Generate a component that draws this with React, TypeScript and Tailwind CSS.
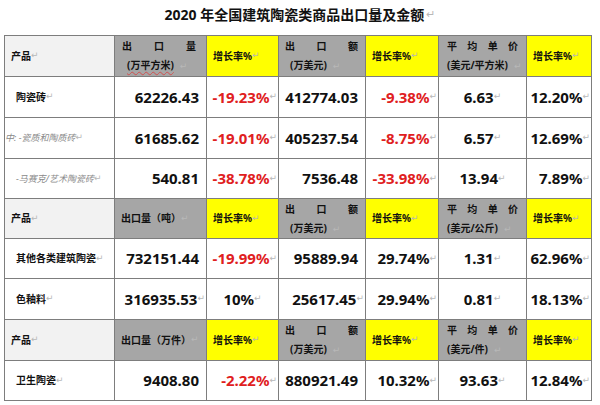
import React from "react";

const Mark = () => <span className="text-[9px] font-normal text-[#b8b8b8] font-['DejaVu_Sans',sans-serif]">↵</span>;

type CellProps = { bg?: string; className?: string; children?: React.ReactNode };

const Cell = ({ bg = "bg-white", className = "", children }: CellProps) => (
  <div className={`${bg} flex items-center overflow-visible whitespace-nowrap ${className}`}>{children}</div>
);

const Spread = ({ text }: { text: string }) => (
  <div className="flex justify-between">
    {text.split("").map((c, i) => (
      <span key={i}>{c}</span>
    ))}
  </div>
);

const TwoLine = ({ top, bottom, wavy = false, indent = "", className = "" }: { top: string; bottom: string; wavy?: boolean; indent?: string; className?: string }) => (
  <Cell bg="bg-[#a6a6a6]" className={`!items-stretch flex-col pt-[1px] text-[10px] font-bold leading-[19px] text-[#111] ${className}`}>
    <Spread text={top} />
    <div className={indent}>
      <span className={wavy ? "underline decoration-wavy decoration-[#d05050] decoration-1 underline-offset-2" : ""}>{bottom}</span>
      <span className="ml-[6px]"><Mark /></span>
    </div>
  </Cell>
);

const Head = ({ text, bg }: { text: string; bg: string }) => (
  <Cell bg={bg} className="pl-[6px] text-[10px] font-bold text-[#111]">
    {text}
    <Mark />
  </Cell>
);

const Num = ({ v, red = false, mark = false, center = false, pr = "pr-[7px]" }: { v: string; red?: boolean; mark?: boolean; center?: boolean; pr?: string }) => (
  <Cell className={`${center ? "justify-center" : `justify-end ${pr}`} text-[15px] font-bold ${red ? "text-[#e0201e]" : "text-[#111]"}`}>
    {v}
    {mark && <Mark />}
  </Cell>
);

const Label = ({ text }: { text: string }) => (
  <Cell className="pl-[11px] text-[10px] font-bold text-[#111]">
    {text}
    <Mark />
  </Cell>
);

const Sub = ({ text, pl }: { text: string; pl: string }) => (
  <Cell className={`${pl} text-[9px] italic text-[#8a8a8a]`}>
    {text}
    <Mark />
  </Cell>
);

const HeaderRow = ({ qty, price }: { qty: string; price: string }) => (
  <>
    <Head text="产品" bg="bg-[#f2f2f2]" />
    <Head text={qty} bg="bg-[#a6a6a6]" />
    <Head text="增长率%" bg="bg-[#ffff00]" />
    <TwoLine top="出口额" bottom="(万美元)" indent="pl-[5px]" className="pl-[6px] pr-[7px]" />
    <Head text="增长率%" bg="bg-[#ffff00]" />
    <TwoLine top="平均单价" bottom={price} className="pl-[8px] pr-[8px]" />
    <Head text="增长率%" bg="bg-[#ffff00]" />
  </>
);

export default function App() {
  return (
    <div className="h-[405px] w-[600px] overflow-hidden bg-white font-['Noto_Sans','Noto_Sans_CJK_SC',sans-serif]">
      <div className="flex h-[35px] justify-center pt-[5px] text-[14px] font-bold leading-[20px] text-[#111]">
        2020 年全国建筑陶瓷类商品出口量及金额
        <span className="ml-[2px] text-[11px] font-normal text-[#b8b8b8] font-['DejaVu_Sans',sans-serif]">↵</span>
      </div>
      <div className="ml-[4px] grid w-fit grid-cols-[109px_91px_71px_86px_72px_87px_64px] grid-rows-[40px_40px_40px_39px_39px_39px_40px_40px_39px] gap-px bg-[#7d7d7d] p-px">
        {/* header 1 */}
        <Head text="产品" bg="bg-[#f2f2f2]" />
        <TwoLine top="出口量" bottom="(万平方米)" wavy indent="pl-[5px]" className="pl-[7px] pr-[10px]" />
        <Head text="增长率%" bg="bg-[#ffff00]" />
        <TwoLine top="出口额" bottom="(万美元)" indent="pl-[5px]" className="pl-[6px] pr-[7px]" />
        <Head text="增长率%" bg="bg-[#ffff00]" />
        <TwoLine top="平均单价" bottom="(美元/平方米)" className="pl-[8px] pr-[8px]" />
        <Head text="增长率%" bg="bg-[#ffff00]" />

        <Label text="陶瓷砖" />
        <Num v="62226.43" />
        <Num v="-19.23%" red mark pr="pr-[1px]" />
        <Num v="412774.03" />
        <Num v="-9.38%" red mark pr="pr-[1px]" />
        <Num v="6.63" mark center />
        <Num v="12.20%" mark pr="pr-[1px]" />

        <Sub text="中: -瓷质和陶质砖" pl="pl-0" />
        <Num v="61685.62" />
        <Num v="-19.01%" red mark pr="pr-[1px]" />
        <Num v="405237.54" />
        <Num v="-8.75%" red mark pr="pr-[1px]" />
        <Num v="6.57" mark center />
        <Num v="12.69%" mark pr="pr-[1px]" />

        <Sub text="-马赛克/艺术陶瓷砖" pl="pl-[11px]" />
        <Num v="540.81" />
        <Num v="-38.78%" red mark pr="pr-[1px]" />
        <Num v="7536.48" />
        <Num v="-33.98%" red mark pr="pr-[1px]" />
        <Num v="13.94" mark center />
        <Num v="7.89%" mark pr="pr-[1px]" />

        <HeaderRow qty="出口量（吨）" price="(美元/公斤)" />

        <Label text="其他各类建筑陶瓷" />
        <Num v="732151.44" />
        <Num v="-19.99%" red mark pr="pr-[1px]" />
        <Num v="95889.94" />
        <Num v="29.74%" mark pr="pr-[1px]" />
        <Num v="1.31" mark center />
        <Num v="62.96%" mark pr="pr-[1px]" />

        <Label text="色釉料" />
        <Num v="316935.53" mark pr="pr-[1px]" />
        <Num v="10%" mark center />
        <Num v="25617.45" mark pr="pr-[1px]" />
        <Num v="29.94%" mark pr="pr-[1px]" />
        <Num v="0.81" mark center />
        <Num v="18.13%" mark pr="pr-[1px]" />

        <HeaderRow qty="出口量（万件）" price="(美元/件)" />

        <Label text="卫生陶瓷" />
        <Num v="9408.80" />
        <Num v="-2.22%" red mark pr="pr-[1px]" />
        <Num v="880921.49" />
        <Num v="10.32%" mark pr="pr-[1px]" />
        <Num v="93.63" mark center />
        <Num v="12.84%" mark pr="pr-[1px]" />
      </div>
    </div>
  );
}
